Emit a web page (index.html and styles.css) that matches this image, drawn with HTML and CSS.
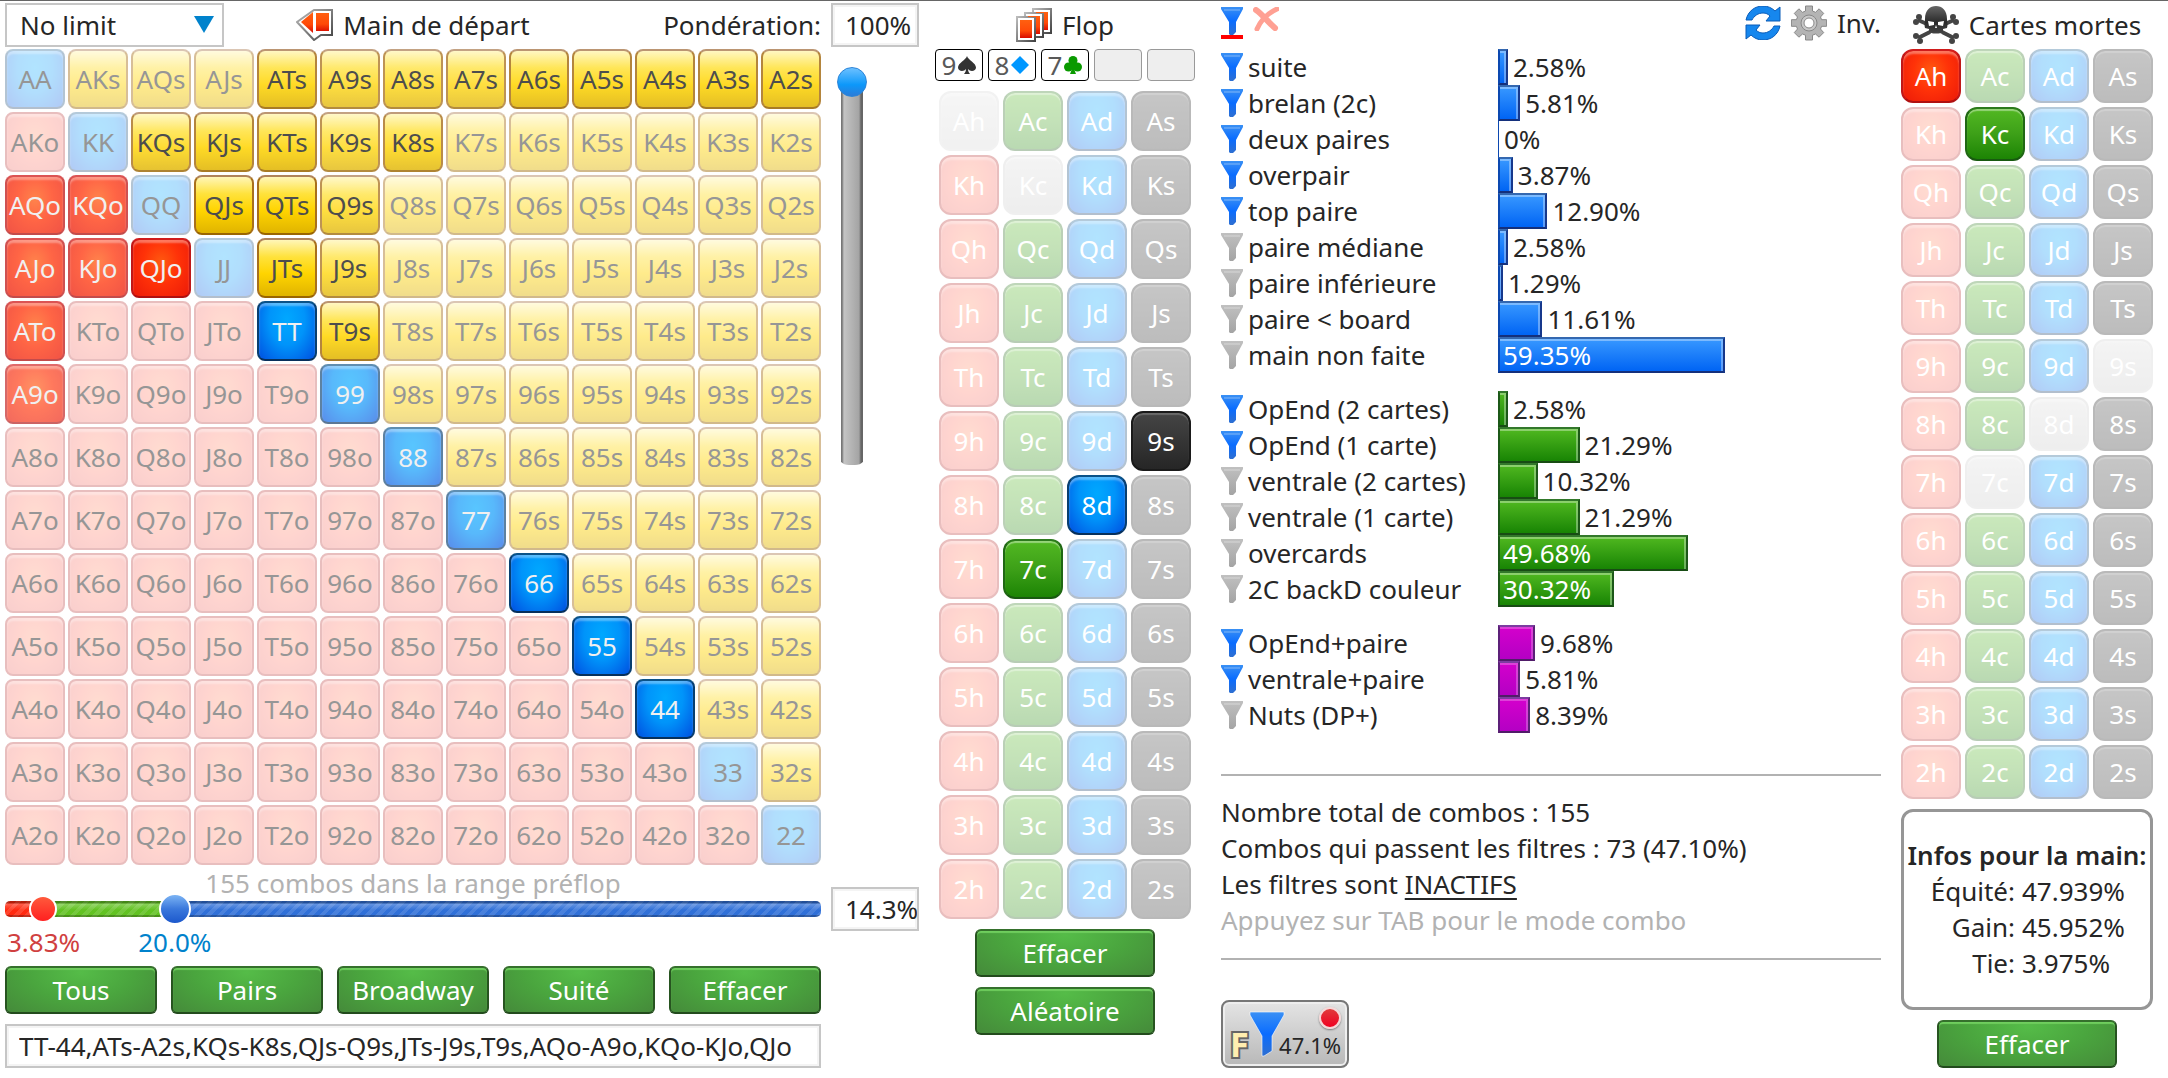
FILE: index.html
```html
<!DOCTYPE html>
<html lang="fr">

<head>
  <meta charset="UTF-8" />
  <meta name="viewport" content="width=device-width, initial-scale=1.0" />
  <title>Range et équité</title>
  <link rel="stylesheet" href="styles.css">
</head>

<body>

  <!-- Shared icons -->
  <svg class="sprite" width="0" height="0" aria-hidden="true">
    <defs>
      <linearGradient id="blue-fill" x1="0" y1="0" x2="0" y2="1">
        <stop offset="0" stop-color="#3a90f4" />
        <stop offset="0.5" stop-color="#0a6cff" />
        <stop offset="1" stop-color="#2f6fd0" />
      </linearGradient>
      <linearGradient id="grey-fill" x1="0" y1="0" x2="0" y2="1">
        <stop offset="0" stop-color="#c0c0c0" />
        <stop offset="1" stop-color="#a4a4a4" />
      </linearGradient>
      <linearGradient id="red-fill" x1="0" y1="0" x2="0" y2="1">
        <stop offset="0" stop-color="#ff6010" />
        <stop offset="0.6" stop-color="#ff4a08" />
        <stop offset="1" stop-color="#d80c00" />
      </linearGradient>
      <linearGradient id="edge-fill" x1="0" y1="0" x2="1" y2="1">
        <stop offset="0" stop-color="#bbb" />
        <stop offset="1" stop-color="#444" />
      </linearGradient>
      <linearGradient id="dark-fill" x1="0" y1="0" x2="0" y2="1">
        <stop offset="0" stop-color="#666" />
        <stop offset="0.6" stop-color="#2a2a2a" />
        <stop offset="1" stop-color="#444" />
      </linearGradient>
    </defs>
    <symbol id="funnel" viewBox="0 0 22 28">
      <path d="M0 0h22v2l-7 13v10l-3 3H9l-1-1V15L0 2z" />
      <path d="M3 3h16" stroke="#fff" stroke-opacity="0.2" stroke-width="2" />
    </symbol>
    <symbol id="arc" viewBox="0 0 36 34">
      <path id="arc-half" d="M1 14C3 5 10 0 18 0c5 0 9 2 12 5l5-4v14H21l4-5c-2-2-4-3-7-3-5 0-9 3-11 7z" />
      <use href="#arc-half" transform="rotate(180 18 17)" />
    </symbol>
  </svg>

  <main class="app">

    <section class="range">
      <header class="range-header">
        <div class="select">
          <select aria-label="Type de jeu">
            <option>No limit</option>
            <option>Pot limit</option>
          </select>
        </div>
        <h2>
          <svg width="37" height="32" viewBox="0 0 37 32">
            <path d="M18 1h18v25h-11l-7 5L1 13z" fill="#fff" stroke="url(#edge-fill)" stroke-width="2" />
            <path d="M17 3v21L5 13z" fill="url(#red-fill)" />
            <path d="M19 3h15v20H19z" fill="url(#red-fill)" stroke="#fff" stroke-width="2" />
          </svg>
          Main de départ
        </h2>
        <label for="weight">Pondération:</label>
      </header>
      <input class="box" id="weight" type="text" value="100%">

      <div class="matrix" id="matrix"></div>
      <input class="weight-slider" type="range" min="0" max="100" value="100" aria-label="Pondération">

      <div class="range-size">
        <p class="muted">155 combos dans la range préflop</p>
        <div class="double-slider">
          <input class="low" type="range" min="0" max="100" step="0.1" value="3.1" aria-label="Début de range">
          <input class="high" type="range" min="0" max="100" step="0.1" value="19.6" aria-label="Fin de range">
        </div>
        <div class="bounds">
          <output class="bound-low">3.83%</output>
          <output class="bound-high">20.0%</output>
        </div>
      </div>
      <input class="box range-percent" type="text" value="14.3%" aria-label="Pourcentage de la range">

      <div class="range-footer">
        <div class="presets">
          <button class="btn">Tous</button>
          <button class="btn">Pairs</button>
          <button class="btn">Broadway</button>
          <button class="btn">Suité</button>
          <button class="btn">Effacer</button>
        </div>
        <input class="box range-text" type="text" aria-label="Range"
          value="TT-44,ATs-A2s,KQs-K8s,QJs-Q9s,JTs-J9s,T9s,AQo-A9o,KQo-KJo,QJo">
      </div>
    </section>

    <section class="flop">
      <h2>
        <svg width="36" height="35" viewBox="0 0 36 35">
          <g fill="#fff" stroke="url(#edge-fill)" stroke-width="2">
            <path d="M17 1h18v24H17z" />
            <path d="M9 5h18v24H9z" />
            <path d="M1 9h18v24H1z" />
          </g>
          <g fill="url(#red-fill)">
            <path d="M20 4h12v18h-4V5h-8z" />
            <path d="M12 8h12v18h-4V9h-8z" />
            <path d="M4 12h12v18H4z" />
          </g>
        </svg>
        Flop
      </h2>
      <div class="board">
        <span class="slot">9<svg width="18" height="18" viewBox="0 0 18 18" fill="#333"><path d="M9 0C10 4 18 7 18 11.500c0 4-6 4.500-8 1.500 0 2 1 4 2 5H6c1-1 2-3 2-5-2 3-8 2.500-8-1.500C0 7 8 4 9 0z" /></svg></span>
        <span class="slot">8<svg width="18" height="18" viewBox="0 0 18 18" fill="#0097ff"><path d="M9 0l9 9-9 9-9-9z" /></svg></span>
        <span class="slot">7<svg width="18" height="18" viewBox="0 0 18 18" fill="#0a9a00"><circle cx="9" cy="4.500" r="4.500" /><circle cx="4.500" cy="11" r="4.500" /><circle cx="13.500" cy="11" r="4.500" /><path d="M8 8h2v5l2 5H6l2-5z" /></svg></span>
        <span class="slot empty"></span>
        <span class="slot empty"></span>
      </div>
      <div class="cards" id="flop-cards"></div>
      <div class="actions">
        <button class="btn">Effacer</button>
        <button class="btn">Aléatoire</button>
      </div>
    </section>

    <section class="filters">
      <header class="toolbar">
        <button class="tool active" aria-label="Filtres">
          <svg width="22" height="28" fill="url(#blue-fill)"><use href="#funnel" /></svg>
        </button>
        <button class="tool" aria-label="Supprimer les filtres">
          <svg width="26" height="24" viewBox="0 0 26 24" fill="none" stroke="#ffa093" stroke-linecap="round">
            <path d="M3 3c6 4 12 12 19 18" stroke-width="6" />
            <path d="M24 2C15 6 8 13 4 22" stroke-width="5" />
          </svg>
        </button>
        <button class="tool push" aria-label="Actualiser">
          <svg width="36" height="34" fill="#1687ee" stroke="#0a5cb8" stroke-width="1"><use href="#arc" /></svg>
        </button>
        <button class="tool" aria-label="Réglages">
          <svg width="36" height="36" viewBox="0 0 36 36">
            <g fill="#b4b4b4" stroke="#888">
              <path d="M14.500 1h7v5l3 1.300 3.600-3.500 4.600 4.600L29.500 12l1.100 2.700h5v6.600h-5L29.500 24l3.200 3.600-4.600 4.600-3.600-3.200-3 1.200V35h-7v-4.800l-3-1.200-3.600 3.200-4.600-4.600L6.500 24l-1.100-2.700h-5v-6.600h5L6.500 12 3.300 8.400l4.600-4.600 3.600 3.500 3-1.300z" />
              <circle cx="18" cy="18" r="8" fill="#c8c8c8" />
              <circle cx="18" cy="18" r="5" fill="#fff" />
            </g>
          </svg>
        </button>
        <button class="tool inverse">Inv.</button>
      </header>

      <div id="filter-groups"></div>

      <div class="summary">
        <p>Nombre total de combos : 155</p>
        <p>Combos qui passent les filtres : 73 (47.10%)</p>
        <p>Les filtres sont <u>INACTIFS</u></p>
        <p class="muted">Appuyez sur TAB pour le mode combo</p>
      </div>

      <button class="filter-toggle">
        <span class="key">F</span>
        <svg width="36" height="46" viewBox="-1 -1 36 46">
          <path d="M0 0h34v3L22 24v15l-8 5h-2V24L0 3z" fill="url(#blue-fill)" stroke="#fff" stroke-opacity="0.6" />
        </svg>
        <span class="led"></span>
        <span class="rate">47.1%</span>
      </button>
    </section>

    <section class="dead">
      <h2>
        <svg width="46" height="38" viewBox="0 0 46 38" fill="url(#dark-fill)">
          <g stroke="#444" stroke-width="4" fill="none">
            <path d="M5 14l9 4M41 14l-9 4M5 32l12-6M41 32l-12-6" />
          </g>
          <g fill="#444">
            <circle cx="6" cy="11" r="3" /><circle cx="3" cy="16" r="3" /><circle cx="40" cy="11" r="3" /><circle cx="43" cy="16" r="3" />
            <circle cx="3" cy="30" r="3" /><circle cx="7" cy="35" r="3" /><circle cx="43" cy="30" r="3" /><circle cx="39" cy="35" r="3" />
          </g>
          <path d="M12 13C12 4 17 0 23 0s11 4 11 13c0 3 1 6 0 9l-4 1v3c0 2-14 2-14 0v-3l-4-1c-1-3 0-6 0-9z" />
          <path d="M15 15l6 1v3l-5 1zM31 15l-6 1v3l5 1zM23 19l1 3h-2z" fill="#fff" />
        </svg>
        Cartes mortes
      </h2>
      <div class="cards compact" id="dead-cards"></div>
      <div class="infos">
        <h3>Infos pour la main:</h3>
        <dl>
          <dt>Équité:</dt>
          <dd>47.939%</dd>
          <dt>Gain:</dt>
          <dd>45.952%</dd>
          <dt>Tie:</dt>
          <dd>3.975%</dd>
        </dl>
      </div>
      <div class="actions">
        <button class="btn">Effacer</button>
      </div>
    </section>

  </main>

  <script>
    const ranks = 'AKQJT98765432'.split('');
    const suits = ['h', 'c', 'd', 's'];

    // Weight of each hand in the range, hands left out are not played
    const weights = {
      TT: 1, 99: 0.65, 88: 0.65, 77: 0.65, 66: 1, 55: 1, 44: 1,
      ATs: 0.85, A9s: 0.75, A8s: 0.75, A7s: 0.75, A6s: 0.85, A5s: 0.85, A4s: 0.85, A3s: 0.85, A2s: 0.85,
      KQs: 0.8, KJs: 0.85, KTs: 0.85, K9s: 0.75, K8s: 0.8,
      QJs: 1, QTs: 1, Q9s: 0.75, JTs: 1, J9s: 0.75, T9s: 0.85,
      AQo: 0.75, AJo: 0.75, ATo: 0.75, A9o: 0.65, KQo: 0.75, KJo: 0.75, QJo: 1
    };

    const groups = [
      {
        color: 'blue',
        rows: [
          ['suite', '2.58', true],
          ['brelan (2c)', '5.81', true],
          ['deux paires', '0', true],
          ['overpair', '3.87', true],
          ['top paire', '12.90', true],
          ['paire médiane', '2.58', false],
          ['paire inférieure', '1.29', false],
          ['paire &lt; board', '11.61', false],
          ['main non faite', '59.35', false]
        ]
      },
      {
        color: 'green',
        rows: [
          ['OpEnd (2 cartes)', '2.58', true],
          ['OpEnd (1 carte)', '21.29', true],
          ['ventrale (2 cartes)', '10.32', false],
          ['ventrale (1 carte)', '21.29', false],
          ['overcards', '49.68', false],
          ['2C backD couleur', '30.32', false]
        ]
      },
      {
        color: 'purple',
        rows: [
          ['OpEnd+paire', '9.68', true],
          ['ventrale+paire', '5.81', true],
          ['Nuts (DP+)', '8.39', false]
        ]
      }
    ];

    function renderMatrix() {
      const matrix = document.getElementById('matrix');
      ranks.forEach((row, i) => {
        ranks.forEach((col, j) => {
          let hand = row + col;
          let type = 'pair';
          if (j > i) { hand = row + col + 's'; type = 'suited'; }
          if (j < i) { hand = col + row + 'o'; type = 'offsuit'; }
          const cell = document.createElement('button');
          cell.className = 'cell ' + type;
          cell.textContent = hand;
          if (weights[hand]) {
            cell.classList.add('on');
            cell.style.setProperty('--weight', weights[hand]);
          }
          matrix.appendChild(cell);
        });
      });
    }

    function renderCards(id, selected, disabled) {
      const grid = document.getElementById(id);
      ranks.forEach(rank => {
        suits.forEach(suit => {
          const card = document.createElement('button');
          card.className = 'cell card suit-' + suit;
          card.textContent = rank + suit;
          if (selected.includes(rank + suit)) card.classList.add('on');
          card.disabled = disabled.includes(rank + suit);
          grid.appendChild(card);
        });
      });
    }

    function renderFilters() {
      document.getElementById('filter-groups').innerHTML = groups.map(group => `
        <div class="filter-group ${group.color}">
          ${group.rows.map(([label, value, active]) => `
          <div class="filter-row ${value > 30 ? 'inside' : ''}">
            <button class="filter-name" aria-pressed="${active}">
              <svg width="22" height="28" fill="url(#${active ? 'blue' : 'grey'}-fill)"><use href="#funnel" /></svg>${label}
            </button>
            <div class="chart">
              <div class="bar ${value > 0 ? '' : 'zero'}" style="width: ${value}%"></div>
              <span class="value">${value}%</span>
            </div>
          </div>`).join('')}
        </div>`).join('');
    }

    renderMatrix();
    renderCards('flop-cards', ['9s', '8d', '7c'], ['Ah', 'Kc']);
    renderCards('dead-cards', ['Ah', 'Kc'], ['9s', '8d', '7c']);
    renderFilters();
  </script>
</body>

</html>
```
FILE: styles.css
```css
* {
  box-sizing: border-box;
  margin: 0;
  padding: 0;
}

body {
  font-family: "Noto Sans", "Open Sans", sans-serif;
  font-size: 26px;
  line-height: 36px;
  color: #262626;
  background: #fff;
}

button,
input,
select {
  font: inherit;
  color: inherit;
}

button {
  border: none;
  background: none;
  cursor: pointer;
  white-space: nowrap;
}

svg {
  display: block;
  flex: none;
}

h2,
h3 {
  font-size: 26px;
}

h2 {
  display: flex;
  align-items: center;
  justify-content: center;
  gap: 10px;
  height: 44px;
  font-weight: normal;
  white-space: nowrap;
}

.sprite {
  position: absolute;
}

.muted {
  color: #b2b2b2;
}

.app {
  display: grid;
  grid-template-columns: auto auto 1fr auto;
  column-gap: 16px;
  align-items: start;
  padding: 2px 15px 10px 5px;
  border-top: 1px solid #666;
}

/* Boxes and buttons */

.box {
  width: 100%;
  height: 44px;
  min-width: 0;
  padding-left: 12px;
  border: 2px solid #c6c6c6;
  box-shadow: inset 0 0 0 2px #f4f4f4;
  background: #fff;
}

.btn {
  height: 48px;
  color: #fff;
  border: 2px solid;
  border-color: #35702c #275420 #234b1d;
  border-radius: 6px;
  background: radial-gradient(ellipse at 50% 10%, #55bc48 0%, #4aa53e 50%, #458a3a 100%);
  box-shadow: inset 0 2px 1px #6fce5e;
}

.actions {
  display: flex;
  flex-direction: column;
  align-items: center;
  gap: 10px;
  margin-top: 10px;
}

.actions .btn {
  width: 180px;
}

/* Preflop range */

.range {
  display: grid;
  grid-template-columns: auto 88px;
  column-gap: 10px;
}

.range-header {
  display: grid;
  grid-template-columns: 1fr auto 1fr;
  align-items: center;
  margin-bottom: 2px;
}

.range-header label {
  text-align: right;
}

.select {
  position: relative;
  width: 219px;
}

.select select {
  width: 100%;
  height: 44px;
  padding-left: 13px;
  appearance: none;
  border: 2px solid #c6c6c6;
  background: #fff;
}

.select::after {
  content: "";
  position: absolute;
  top: 13px;
  right: 10px;
  width: 20px;
  height: 17px;
  background: #0082cc;
  clip-path: polygon(0 0, 100% 0, 50% 100%);
  pointer-events: none;
}

.matrix {
  display: grid;
  grid-template-columns: repeat(13, 60px);
  grid-auto-rows: 60px;
  gap: 3px;
}

.cell {
  --weight: 0.3;
  position: relative;
  isolation: isolate;
  color: #969696;
}

.cell::before {
  content: "";
  position: absolute;
  inset: 0;
  z-index: -1;
  border: 2px solid;
  border-radius: 8px;
  opacity: var(--weight);
}

.pair::before,
.suit-d::before {
  border-color: #0a5288 #083e70 #06305c;
  background: radial-gradient(ellipse at 50% 30%, #00a8ff 0%, #0094fa 45%, #0050e0 100%);
  box-shadow: inset 0 3px 2px rgba(255, 255, 255, 0.35);
}

.suited {
  --weight: 0.45;
}

.suited::before {
  border-color: #b0835a #a8701c #9a6500;
  background: linear-gradient(#fff6b8 0%, #ffe23c 30%, #ffd400 60%, #e0b400 100%);
}

.offsuit,
.suit-h {
  --weight: 0.25;
}

.offsuit::before,
.suit-h::before {
  border-color: #d01c1c #c01818 #b01010;
  background: radial-gradient(ellipse at 50% 40%, #ff5a10 0%, #ff3208 45%, #ec1a08 100%);
  box-shadow: inset 0 3px 2px rgba(255, 255, 255, 0.35);
}

/* Unplayed offsuit hands and hearts are a softer pink */
.offsuit:not(.on)::before,
.suit-h:not(.on):not(:disabled)::before {
  border-color: #a80000;
  background: radial-gradient(ellipse at 50% 40%, #ff7a48 0%, #ff5844 50%, #e8403c 100%);
}

.suit-c::before {
  border-color: #2c7a1c #206814 #185a10;
  background: linear-gradient(#52b822, #3da018 50%, #1c8404);
  box-shadow: inset 0 2px 1px rgba(255, 255, 255, 0.4);
}

.suit-s::before {
  border-color: #1a1a1a;
  background: linear-gradient(#454545, #262626);
  box-shadow: inset 0 2px 1px rgba(255, 255, 255, 0.2);
}

.cell.on {
  color: #f0f0f0;
}

.suited.on {
  color: #4d4d4d;
}

.card,
.card.on {
  color: #fff;
}

.card::before {
  border-radius: 12px;
}

.card.on {
  --weight: 1;
}

.card:disabled::before {
  border-color: #ccc;
  background: linear-gradient(#dcdcdc, #c8c8c8);
}

/* Vertical weight slider */

.weight-slider {
  appearance: none;
  writing-mode: vertical-lr;
  direction: rtl;
  width: 30px;
  height: 398px;
  margin: 18px 6px 0;
  background: linear-gradient(to right, #777 0 1px, #c4c4c4 3px, #a4a4a4 18px, #666 20px 22px) center bottom / 22px 385px no-repeat;
  border-radius: 12px;
}

.weight-slider::-webkit-slider-thumb {
  appearance: none;
  width: 30px;
  height: 30px;
  border: 1px solid #2c84d8;
  border-radius: 50%;
  background: linear-gradient(#6cc0ff, #0c98fa 60%, #2c7cd8);
}

/* Range size slider */

.range-size {
  height: 101px;
}

.range-size .muted {
  text-align: center;
}

.double-slider {
  position: relative;
  height: 16px;
  border-radius: 5px;
  background:
    linear-gradient(rgba(0, 0, 0, 0.3) 0 2px, rgba(255, 255, 255, 0.25) 3px, transparent 9px 14px, rgba(0, 0, 0, 0.25) 14px),
    repeating-linear-gradient(135deg, rgba(255, 255, 255, 0.12) 0 4px, transparent 4px 8px),
    linear-gradient(to right, #ff2a10 0 4.6%, #62c222 4.6% 20.8%, #3070d8 20.8%);
}

.double-slider input {
  position: absolute;
  left: 0;
  top: -8px;
  width: 100%;
  height: 32px;
  appearance: none;
  background: none;
  pointer-events: none;
}

.double-slider input::-webkit-slider-thumb {
  appearance: none;
  width: 32px;
  height: 32px;
  border: 2px solid #fff;
  border-radius: 50%;
  background: linear-gradient(#7cb4f4, #3a78dc 50%, #1c58cc);
  pointer-events: auto;
}

.double-slider .low::-webkit-slider-thumb {
  width: 28px;
  height: 28px;
  background: linear-gradient(#ff5a3c, #ff2020);
}

.bounds {
  display: flex;
  gap: 58px;
  padding: 7px 2px 0;
}

.bound-low {
  color: #d04040;
}

.bound-high {
  color: #0082cc;
}

.range-percent {
  margin-top: 22px;
}

.presets {
  display: grid;
  grid-template-columns: repeat(5, 1fr);
  gap: 14px;
  margin-bottom: 10px;
}

/* Flop */

.board {
  display: grid;
  grid-template-columns: repeat(5, 48px);
  gap: 5px;
  margin: 2px 0 10px;
}

.slot {
  display: flex;
  align-items: center;
  justify-content: center;
  gap: 2px;
  height: 32px;
  color: #595959;
  border: 1px solid #000;
  border-radius: 4px;
}

.slot.empty {
  border-color: #999;
  background: #eee;
}

.cards {
  display: grid;
  grid-template-columns: repeat(4, 60px);
  grid-auto-rows: 60px;
  justify-content: center;
  gap: 4px;
}

.cards.compact {
  grid-auto-rows: 54px;
  margin-top: 2px;
}

/* Postflop filters */

.filters {
  margin: 0 4px 0 10px;
}

.toolbar {
  display: flex;
  align-items: flex-start;
  gap: 10px;
  height: 46px;
  padding-top: 2px;
}

.tool.active {
  margin-top: 2px;
  border-bottom: 4px solid #f00;
}

.tool:nth-child(2) {
  margin-top: 2px;
}

.push {
  margin: 1px 0 0 auto;
}

.filter-group {
  margin-bottom: 18px;
}

.filter-row {
  display: grid;
  grid-template-columns: 277px 1fr;
  height: 36px;
}

.filter-name {
  display: flex;
  align-items: center;
  gap: 5px;
  text-align: left;
}

.chart {
  position: relative;
  display: flex;
}

.bar {
  flex: none;
  border: 2px solid;
}

.bar.zero {
  border-width: 0 0 0 1px;
}

.blue .bar {
  border-color: #3468b0 #16388c #14307c #0c48b0;
  background: linear-gradient(#3898ff, #0064f4);
  box-shadow: inset -2px 2px rgba(255, 255, 255, 0.35);
}

.green .bar {
  border-color: #32782a #1c5818 #184c14;
  background: linear-gradient(#50b820, #188404);
  box-shadow: inset -2px 2px rgba(255, 255, 255, 0.35);
}

.purple .bar {
  border-color: #7c3ca0 #5c2078 #501c68;
  background: linear-gradient(#d400cc, #b400c4);
  box-shadow: inset -2px 2px rgba(255, 255, 255, 0.25);
}

.value {
  padding-left: 5px;
}

/* Long bars carry their value on top of them */
.inside .value {
  position: absolute;
  left: 0;
  color: #fff;
}

.summary {
  margin-top: 41px;
  padding: 18px 0 20px;
  border: solid #b2b2b2;
  border-width: 2px 0;
}

.summary u {
  text-decoration-thickness: 2px;
  text-underline-offset: 4px;
}

.filter-toggle {
  position: relative;
  width: 128px;
  height: 68px;
  margin-top: 40px;
  border: 2px solid #777;
  border-radius: 8px;
  background: linear-gradient(#e4e4e4, #b8b8b8);
  box-shadow: inset 0 0 0 2px #eee;
}

.filter-toggle svg {
  position: absolute;
  left: 26px;
  top: 9px;
}

.key {
  position: absolute;
  left: 7px;
  bottom: 5px;
  font-size: 34px;
  font-weight: bold;
  line-height: 34px;
  color: #ffeeb0;
  -webkit-text-stroke: 4px #666;
  paint-order: stroke;
}

.rate {
  position: absolute;
  right: 6px;
  bottom: 8px;
  font-size: 22px;
  line-height: 26px;
}

.led {
  position: absolute;
  top: 5px;
  right: 6px;
  width: 22px;
  height: 22px;
  border: 2px solid #f4d8d8;
  border-radius: 50%;
  background: linear-gradient(#e03c3c, #f00020);
  box-shadow: 0 1px 2px #777;
}

/* Dead cards */

.infos {
  margin-top: 10px;
  padding: 25px 0 26px;
  border: 3px solid #969696;
  border-radius: 12px;
}

.infos h3 {
  font-weight: 600;
  text-align: center;
  white-space: nowrap;
}

.infos dl {
  display: grid;
  grid-template-columns: 111px auto;
  column-gap: 7px;
}

.infos dt {
  text-align: right;
}
```
